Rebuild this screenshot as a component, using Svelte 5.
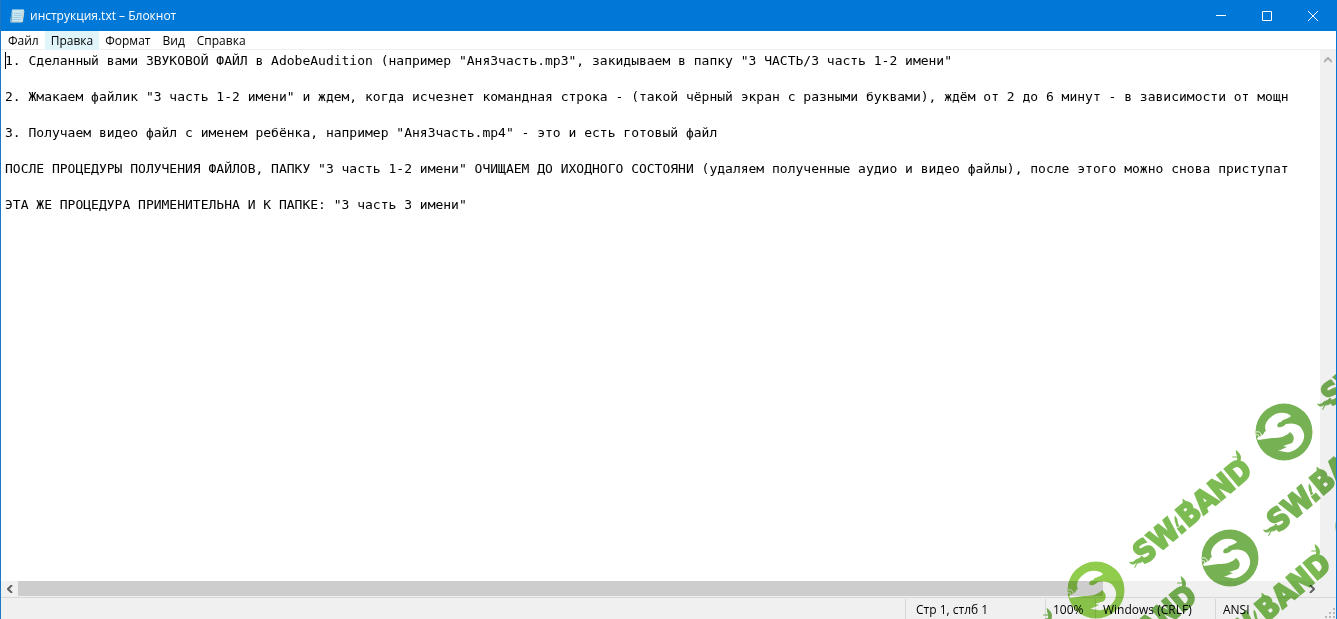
<script lang="ts">
	const menus = ['Файл', 'Правка', 'Формат', 'Вид', 'Справка'];
	let active = 'Правка';

	let content = [
		'1. Сделанный вами ЗВУКОВОЙ ФАЙЛ в AdobeAudition (например "Аня3часть.mp3", закидываем в папку "3 ЧАСТЬ/3 часть 1-2 имени"',
		'2. Жмакаем файлик "3 часть 1-2 имени" и ждем, когда исчезнет командная строка - (такой чёрный экран с разными буквами), ждём от 2 до 6 минут - в зависимости от мощн',
		'3. Получаем видео файл с именем ребёнка, например "Аня3часть.mp4" - это и есть готовый файл',
		'ПОСЛЕ ПРОЦЕДУРЫ ПОЛУЧЕНИЯ ФАЙЛОВ, ПАПКУ "3 часть 1-2 имени" ОЧИЩАЕМ ДО ИХОДНОГО СОСТОЯНИ (удаляем полученные аудио и видео файлы), после этого можно снова приступат',
		'ЭТА ЖЕ ПРОЦЕДУРА ПРИМЕНИТЕЛЬНА И К ПАПКЕ: "3 часть 3 имени"'
	].join('\n\n');

	// repeated stamps: centre of the badge and the two greens
	const stamps = [
		{ x: 257, y: 73, badge: '#6fae49', word: '#70ae49' },
		{ x: 69, y: 231, badge: '#8bcb43', word: '#76b84a' },
		{ x: 203, y: 199, badge: '#6fae49', word: '#70ae49' },
		{ x: 337, y: 167, badge: '#6fae49', word: '#70ae49' },
		{ x: 14, y: 357, badge: '#6fae49', word: '#70b049' },
		{ x: 148, y: 325, badge: '#6fae49', word: '#74b64a' },
		{ x: -120, y: 389, badge: '#6fae49', word: '#70ae49' }
	];
</script>

<div class="window">
	<header class="titlebar">
		<svg class="app-icon" width="16" height="16" viewBox="0 0 16 16" aria-hidden="true">
			<path d="M3 2h12l-1 12H1z" fill="#a9d3e8" />
			<path d="M1 13l2-10 1 10-2 2z" fill="#6da7c8" />
			<path d="M4 3h10l-1 10H3z" fill="#c9e6f1" />
			<path d="M5 5.500h8M5 7.500h8M4.500 9.500h8M4 11.500h8" stroke="#a3cde0" />
			<path d="M4 1v2M6 1v2M8 1v2M10 1v2M12 1v2M14 1v2" stroke="#e8efe9" />
			<path d="M2 14h11l2-11" fill="none" stroke="#d4d9cc" />
		</svg>
		<h1>инструкция.txt – Блокнот</h1>
		<div class="controls">
			<button type="button" aria-label="Свернуть">
				<svg width="10" height="10" viewBox="0 0 10 10"><path d="M0 4.500h10" /></svg>
			</button>
			<button type="button" aria-label="Развернуть">
				<svg width="10" height="10" viewBox="0 0 10 10"><path d="M.5.5h9v9h-9z" /></svg>
			</button>
			<button type="button" aria-label="Закрыть">
				<svg width="10" height="10" viewBox="0 0 10 10"><path d="M0 0l10 10M10 0L0 10" /></svg>
			</button>
		</div>
	</header>

	<nav class="menubar">
		{#each menus as menu}
			<button type="button" class:active={menu === active} on:click={() => (active = menu)}>{menu}</button>
		{/each}
	</nav>

	<main class="editor">
		<div class="page">
			<textarea bind:value={content} wrap="off" spellcheck="false" aria-label="Текст документа"></textarea>
			<span class="caret"></span>
		</div>
		<div class="vscroll">
			<button type="button" aria-label="Вверх" disabled>
				<svg width="8" height="6" viewBox="0 0 8 6"><path d="M0 5l4-4 4 4" /></svg>
			</button>
		</div>
	</main>
	<div class="hscroll">
		<button type="button" aria-label="Влево">
			<svg width="6" height="8" viewBox="0 0 6 8"><path d="M5 0L1 4l4 4" /></svg>
		</button>
		<div class="track"><div class="thumb"></div></div>
		<button type="button" aria-label="Вправо">
			<svg width="6" height="8" viewBox="0 0 6 8"><path d="M1 0l4 4-4 4" /></svg>
		</button>
		<div class="corner"></div>
	</div>

	<footer class="statusbar">
		<span class="position">Стр 1, стлб 1</span>
		<span class="zoom">100%</span>
		<span class="eol">Windows (CRLF)</span>
		<span class="encoding">ANSI</span>
		<svg class="grip" width="10" height="10" viewBox="0 0 10 10" aria-hidden="true">
			<path d="M8 0h2v2h-2zM4 4h2v2h-2zM8 4h2v2h-2zM0 8h2v2h-2zM4 8h2v2h-2zM8 8h2v2h-2z" />
		</svg>
	</footer>

	<svg class="watermark" width="310" height="260" viewBox="0 0 310 260" aria-hidden="true">
		{#each stamps as stamp}
			<g transform="translate({stamp.x} {stamp.y})">
				<path
					fill={stamp.badge}
					fill-rule="evenodd"
					d="M0-28.500A28.500 28.500 0 1 1 0 28.500A28.500 28.500 0 1 1 0-28.500Z
					M7-16C2-21-8-20-13-15C-19-10-20-5-18-1C-20-1-20 3-23 4L-27 6L-26 8L-12 6C-5 6 2 5 6 0C10 3 11 7 8 11L-1 14L3 15L-6 19C1 19 1 21 6 20C16 17 21 9 20 2C18-7 11-10 2-8C0-6-3-4-6-5C-8-6-6-10-3-10C-1-11-2-13 0-12C2-14 4-13 7-16Z"
				/>
				<path d="M-28 0c4-1 6 2 5 5M-28 3c2-1 3 0 3 3" fill="none" stroke="#fff" />
				<g transform="translate(48 -25) rotate(-40)" fill={stamp.word} stroke={stamp.word}>
					<text x="0" y="0">SW.BAND</text>
					<path
						d="M4-5c-3 2-6 1-9-2c-3 0-4-2-4-4c2 2 4 3 6 2c3 1 5 2 7 1zM-4-6l-5 2M50-8c2-4 2-7 5-9c0 5-3 5-3 9zM68-20l4-5l1 5M137-19c5-2 4-5 7-9c1 4 0 8-4 10zM141-23l-4-3"
					/>
				</g>
			</g>
		{/each}
	</svg>
</div>

<style>
	:global(body) {
		margin: 0;
	}

	.window {
		position: relative;
		display: flex;
		flex-direction: column;
		box-sizing: border-box;
		min-height: 100vh;
		border-left: 1px solid #1f78bf;
		border-right: 1px solid #0078d7;
		background: #fff;
		color: #000;
		font: 12px/16px 'Open Sans', 'Noto Sans', sans-serif;
		overflow: hidden;
	}

	button {
		display: flex;
		align-items: center;
		justify-content: center;
		padding: 0;
		border: 0;
		background: none;
		color: inherit;
		font: inherit;
	}

	.titlebar {
		display: flex;
		align-items: center;
		height: 31px;
		padding-left: 8px;
		background: #0078d7;
		color: #fff;
	}

	h1 {
		flex: 1;
		margin: 0 0 0 5px;
		font-size: 12px;
		font-weight: 400;
	}

	.controls {
		display: flex;
	}

	.controls button {
		width: 46px;
		height: 31px;
	}

	.controls path {
		fill: none;
		stroke: #fff;
	}

	.menubar {
		display: flex;
		height: 18px;
		padding-left: 1px;
		border-bottom: 1px solid #f0f0f0;
	}

	.menubar button {
		height: 19px;
		padding: 0 6px;
	}

	.menubar .active {
		background: #e0f5fa;
	}

	.editor {
		display: flex;
		flex: 1;
	}

	.page {
		position: relative;
		display: flex;
		flex: 1;
		min-width: 0;
		padding: 2px 3px 0 4px;
	}

	textarea {
		flex: 1;
		min-width: 0;
		padding: 0;
		border: 0;
		outline: 0;
		resize: none;
		overflow: hidden;
		background: none;
		color: #000;
		font: 13px/18px 'DejaVu Sans Mono', 'Liberation Mono', monospace;
		white-space: pre;
	}

	.caret {
		position: absolute;
		top: 2px;
		left: 4px;
		width: 1px;
		height: 17px;
		background: #000;
	}

	.vscroll {
		width: 16px;
		background: #f0f0f0;
	}

	.vscroll button {
		width: 16px;
		height: 20px;
	}

	.vscroll path,
	.hscroll path {
		fill: none;
		stroke: #606060;
		stroke-width: 2;
	}

	.vscroll path {
		stroke: #b0b0b0;
	}

	.hscroll {
		display: flex;
		height: 16px;
		background: #f0f0f0;
	}

	.hscroll button {
		width: 17px;
		height: 15px;
	}

	.track {
		flex: 1;
	}

	.thumb {
		width: 84.4%;
		height: 15px;
		background: #cdcdcd;
	}

	.corner {
		width: 16px;
	}

	.statusbar {
		position: relative;
		display: flex;
		justify-content: flex-end;
		height: 21px;
		border-top: 1px solid #d7d7d7;
		background: #f0f0f0;
		line-height: 22px;
	}

	.statusbar span {
		box-sizing: border-box;
		margin-top: 1px;
		padding-left: 7px;
		border-left: 1px solid #d7d7d7;
		white-space: nowrap;
	}

	.statusbar .position {
		width: 140px;
		padding-left: 10px;
	}

	.zoom {
		width: 50px;
	}

	.eol {
		width: 120px;
	}

	.encoding {
		width: 121px;
	}

	.grip {
		position: absolute;
		right: 1px;
		bottom: 1px;
		fill: #b8b8b8;
	}

	.watermark {
		position: absolute;
		right: -1px;
		bottom: 0;
		opacity: 0.95;
		mix-blend-mode: multiply;
		pointer-events: none;
	}

	.watermark text {
		font: bold 30px 'DejaVu Sans Condensed', 'DejaVu Sans', sans-serif;
		stroke-width: 2px;
	}
</style>
